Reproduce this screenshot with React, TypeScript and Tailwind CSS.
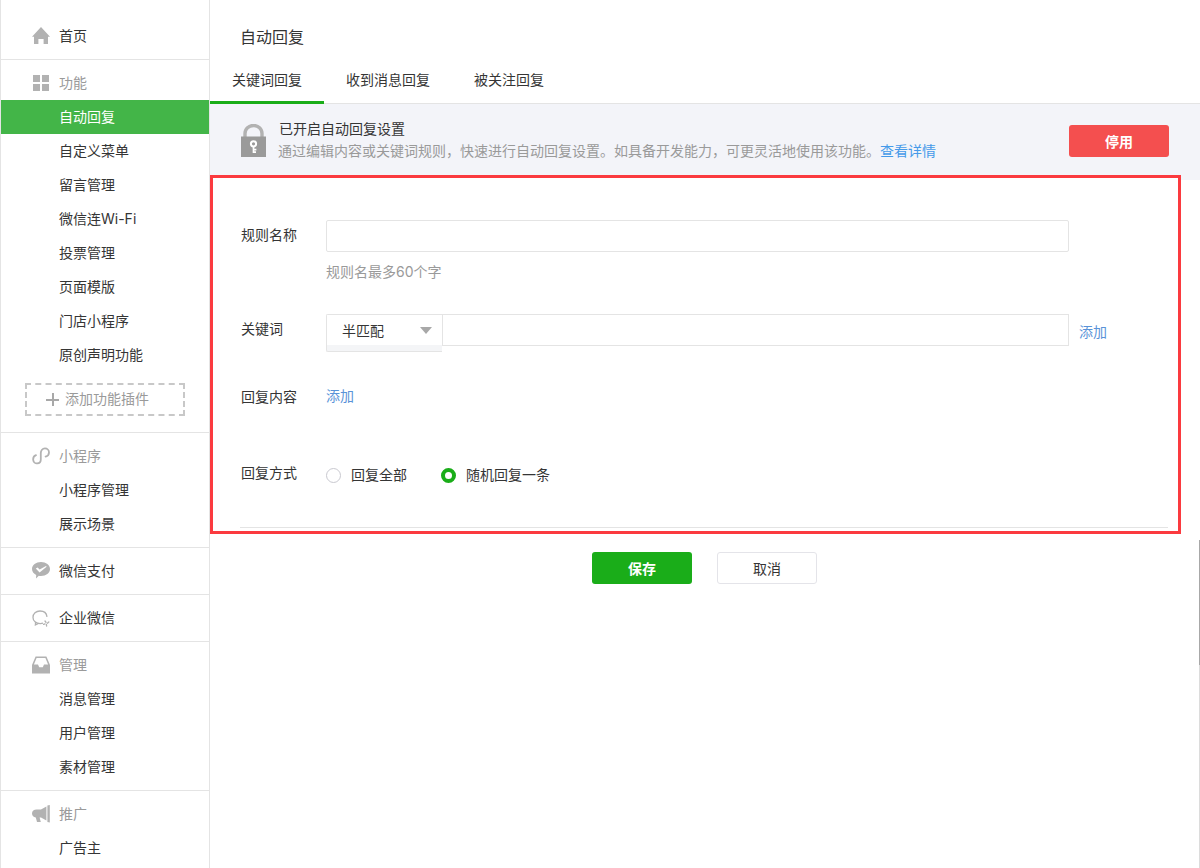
import React from 'react';

const navIcon = 'w-[18px] h-[18px] text-[#b2b2b2] fill-current';

const HomeIcon = () => (
  <svg viewBox="0 0 18 18" className={navIcon}>
    <path d="M9 0 L18 9.8 L16 9.8 L16 17 L11.6 17 L11.6 12 L6.4 12 L6.4 17 L2 17 L2 9.8 L0 9.8 Z" />
  </svg>
);

const GridIcon = () => (
  <svg viewBox="0 0 18 18" className={navIcon}>
    <rect x="1" y="1" width="7" height="7" />
    <rect x="10" y="1" width="7" height="7" />
    <rect x="1" y="10" width="7" height="7" />
    <rect x="10" y="10" width="7" height="7" />
  </svg>
);

const LinkIcon = () => (
  <svg viewBox="0 0 18 18" className="w-[18px] h-[18px] text-[#b2b2b2]" fill="none" stroke="currentColor" strokeWidth="1.8" strokeLinecap="round">
    <path d="M4 8.2 C1.8 9 1 10.8 1.2 12.8 C1.5 15.2 3.4 16.6 5.2 16.4 C7.4 16.2 8.8 14.4 8.8 12.4 L8.8 6 C8.8 3.4 10.6 1.4 12.9 1.4 C15.2 1.4 17 3.2 17 5.4 C17 7.4 15.8 8.9 13.6 9.6" />
  </svg>
);

const PayIcon = () => (
  <svg viewBox="0 0 18 18" className={navIcon}>
    <path fillRule="evenodd" d="M9 0 C14 0 18 3 18 7 C18 11 14 14 9 14 C8.2 14 7.5 13.9 6.8 13.8 L4 16.4 L4.2 13 C1.6 11.7 0 9.5 0 7 C0 3 4 0 9 0 Z M3.8 6.4 L5.6 5.4 L7.6 7.6 L14 4 L14.6 4.8 L7.6 10.6 Z" />
  </svg>
);

const WorkIcon = () => (
  <svg viewBox="0 0 18 18" className="w-[18px] h-[18px] text-[#b2b2b2]" fill="none" stroke="currentColor" strokeWidth="1.3">
    <path d="M11 14.2 C10.2 14.5 9.2 14.6 8.2 14.6 C4 14.6 1 12 1 8.4 C1 4.8 4 2 8 2 C11.8 2 14.6 4.4 15 7.8" />
    <path d="M3.6 13 L3.4 16 L6.4 14.4" />
    <path d="M13 12 L14 13.4 M16.8 13 L15.4 14.2 M14.6 17 L14.4 15.4 M11.6 15.4 L13 14.8" strokeLinecap="round" />
  </svg>
);

const InboxIcon = () => (
  <svg viewBox="0 0 18 18" className={navIcon}>
    <path fillRule="evenodd" d="M3.6 0.5 L14.4 0.5 L18 9 L18 17.5 L0 17.5 L0 9 Z M4.6 2 L1.9 8.6 L6 8.6 L7.2 11.2 L10.8 11.2 L12 8.6 L16.1 8.6 L13.4 2 Z" />
  </svg>
);

const HornIcon = () => (
  <svg viewBox="0 0 18 18" className={navIcon}>
    <path d="M15.4 0.5 L17.8 0 L17.8 17.5 L15.4 17 Z" />
    <path d="M14.4 1.6 L14.4 15.6 L9 12.6 L7.6 12.6 L8.8 17 L5 17 L3.8 12.4 C1.6 12 0 10.6 0 8.4 C0 6 2 4.4 4.6 4.4 L9 4.4 Z" />
  </svg>
);

const LockIcon = () => (
  <svg viewBox="0 0 25 33" className="w-[25px] h-[33px] shrink-0">
    <path d="M4 14 L4 9.5 C4 4.8 7.8 1.5 12.5 1.5 C17.2 1.5 21 4.8 21 9.5 L21 14" fill="none" stroke="#b2b2b2" strokeWidth="3.4" />
    <rect x="0" y="12.5" width="25" height="20.5" fill="#9a9a9a" />
    <circle cx="12.5" cy="19.8" r="2.6" fill="none" stroke="#fff" strokeWidth="2" />
    <path d="M12.5 22 L12.5 29 M12.5 25.6 L15.4 25.6 M12.5 28.2 L15 28.2" stroke="#fff" strokeWidth="1.7" />
  </svg>
);

function NavHead({ icon, label, muted }: { icon: React.ReactNode; label: string; muted?: boolean }) {
  return (
    <div className="flex items-center h-[34px] pl-[31px]">
      <span className="w-[27px] shrink-0 flex">{icon}</span>
      <span className={'-mt-[2px] ' + (muted ? 'text-[#9a9a9a]' : 'text-[#353535]')}>{label}</span>
    </div>
  );
}

function NavItem({ label, active }: { label: string; active?: boolean }) {
  return (
    <div className={'h-[34px] leading-[33px] pl-[58px] ' + (active ? 'bg-[#43b548] text-white' : 'text-[#353535]')}>
      {label}
    </div>
  );
}

function Sidebar() {
  return (
    <aside className="w-[210px] shrink-0 h-full border-l border-r border-[#e4e4e4] bg-white">
      <div className="pt-[19px] pb-[6px] border-b border-[#e4e4e4]">
        <NavHead icon={<HomeIcon />} label="首页" />
      </div>
      <div className="pt-[6px] pb-[16px] border-b border-[#e4e4e4]">
        <NavHead icon={<GridIcon />} label="功能" muted />
        <NavItem label="自动回复" active />
        {['自定义菜单', '留言管理', '微信连Wi-Fi', '投票管理', '页面模版', '门店小程序', '原创声明功能'].map(t => (
          <NavItem key={t} label={t} />
        ))}
        <div className="mt-[11px] mx-[24px] h-[33px] border-2 border-dashed border-[#c8c8c8] flex items-center pl-[19px] gap-[6px] text-[#9a9a9a]">
          <span className="relative w-[13px] h-[13px]">
            <span className="absolute left-[5.5px] top-0 w-[2px] h-[13px] bg-[#a8a8a8]" />
            <span className="absolute left-0 top-[5.5px] w-[13px] h-[2px] bg-[#a8a8a8]" />
          </span>
          <span className="-mt-[3px]">添加功能插件</span>
        </div>
      </div>
      <div className="py-[6px] border-b border-[#e4e4e4]">
        <NavHead icon={<LinkIcon />} label="小程序" muted />
        <NavItem label="小程序管理" />
        <NavItem label="展示场景" />
      </div>
      <div className="py-[6px] border-b border-[#e4e4e4]">
        <NavHead icon={<PayIcon />} label="微信支付" />
      </div>
      <div className="py-[6px] border-b border-[#e4e4e4]">
        <NavHead icon={<WorkIcon />} label="企业微信" />
      </div>
      <div className="py-[6px] border-b border-[#e4e4e4]">
        <NavHead icon={<InboxIcon />} label="管理" muted />
        <NavItem label="消息管理" />
        <NavItem label="用户管理" />
        <NavItem label="素材管理" />
      </div>
      <div className="py-[6px]">
        <NavHead icon={<HornIcon />} label="推广" muted />
        <NavItem label="广告主" />
      </div>
    </aside>
  );
}

function Banner() {
  return (
    <div className="h-[76px] bg-[#f3f4f9] flex pl-[31px] pr-[31px]">
      <div className="flex items-start pt-[20px] gap-[12px] flex-1">
        <LockIcon />
        <div className="-mt-[7px]">
          <div className="text-[#353535] leading-[23px] pl-px">已开启自动回复设置</div>
          <div className="text-[#9a9a9a] leading-[22px]">
            通过编辑内容或关键词规则，快速进行自动回复设置。如具备开发能力，可更灵活地使用该功能。
            <span className="text-[#459ae9]">查看详情</span>
          </div>
        </div>
      </div>
      <button className="mt-[21px] w-[100px] h-[32px] rounded-[3px] bg-[#f44f4f] text-white font-bold">停用</button>
    </div>
  );
}

function RuleForm() {
  return (
    <div className="relative -mt-[5px] w-[971px] h-[359px] border-[3px] border-[#fb3a3f] pl-[28px] pr-[10px] pt-[42px] bg-white text-[#353535]">
      <div className="flex">
        <label className="w-[85px] pt-[5px] leading-[20px]">规则名称</label>
        <div className="w-[743px]">
          <div className="h-[32px] border border-[#e4e4e4] rounded-[2px] bg-white" />
          <div className="mt-[10px] leading-[20px] text-[#9a9a9a]">规则名最多60个字</div>
        </div>
      </div>
      <div className="flex mt-[32px]">
        <label className="w-[85px] pt-[5px] leading-[20px]">关键词</label>
        <div className="w-[116px] h-[38px] border border-[#e4e4e4] border-r-0 rounded-l-[2px] bg-[#f4f5f7] shrink-0">
          <div className="h-[30px] bg-white flex items-center pl-[15px] pr-[10px] justify-between">
            <span>半匹配</span>
            <span className="w-0 h-0 mt-[1px] border-x-[6px] border-x-transparent border-t-[7px] border-t-[#a8a8a8]" />
          </div>
        </div>
        <div className="w-[627px] h-[32px] border border-[#e4e4e4] bg-white" />
        <a className="ml-[10px] mt-[8px] leading-[20px] text-[#5a93d8]">添加</a>
      </div>
      <div className="flex mt-[35px] leading-[20px]">
        <label className="w-[85px]">回复内容</label>
        <a className="-mt-[1px] text-[#5a93d8]">添加</a>
      </div>
      <div className="flex items-center mt-[58px] leading-[20px]">
        <label className="w-[85px] -mt-[4px]">回复方式</label>
        <span className="w-[15px] h-[15px] rounded-full border border-[#c9c9d0] bg-white" />
        <span className="ml-[10px]">回复全部</span>
        <span className="ml-[34px] w-[15px] h-[15px] rounded-full border-[4px] border-[#1aad19] bg-white" />
        <span className="ml-[10px]">随机回复一条</span>
      </div>
      <div className="mt-[42px] -ml-px h-px bg-[#e4e4e4]" />
    </div>
  );
}

export default function App() {
  return (
    <div className="relative flex w-[1200px] h-[868px] overflow-hidden bg-white text-[14px] font-['Inter','Noto_Sans_CJK_SC',sans-serif]">
      <Sidebar />
      <main className="flex-1 min-w-0">
        <div className="h-[60px] pl-[30px] pt-[26px] text-[16px] leading-[22px] text-[#353535]">自动回复</div>
        <div className="flex h-[44px] border-b border-[#e4e4e4] text-[#353535]">
          {['关键词回复', '收到消息回复', '被关注回复'].map((t, i) => (
            <div key={t} className={'px-[22px] pt-[8px] leading-[24px] h-[44px] ' + (i === 0 ? 'border-b-[3px] border-[#1aad19]' : '')}>
              {t}
            </div>
          ))}
        </div>
        <Banner />
        <RuleForm />
        <div className="flex justify-center gap-[25px] mt-[18px] pr-px">
          <button className="w-[100px] h-[32px] rounded-[3px] bg-[#1aad19] text-white font-bold">保存</button>
          <button className="w-[100px] h-[32px] rounded-[3px] border border-[#e4e4e9] bg-white text-[#353535]">取消</button>
        </div>
      </main>
      <div className="absolute right-0 top-[540px] w-px h-[125px] bg-[#a8a8a8]" />
      <div className="absolute right-0 top-[665px] w-px h-[203px] bg-[#dcdcdc]" />
    </div>
  );
}
